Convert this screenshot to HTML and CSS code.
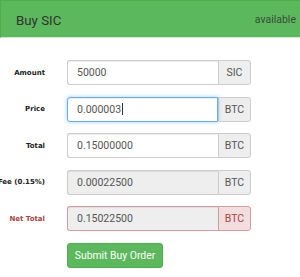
FILE: index.html
```html
<!DOCTYPE html>
<html lang="en">
<head>
    <meta charset="UTF-8">
    <meta name="viewport" content="width=device-width, initial-scale=1.0">
    <title>Buy SIC</title>
    <link rel="stylesheet" href="styles.css">
</head>
<body>
    <div class="panel">
        <div class="panel-heading">
            <span class="panel-title">Buy SIC</span>
            <span class="available">available</span>
        </div>

        <form class="order-form">
            <div class="form-row">
                <label class="row-label">Amount</label>
                <div class="input-group">
                    <div class="field">50000</div>
                    <span class="addon">SIC</span>
                </div>
            </div>
            <div class="form-row">
                <label class="row-label">Price</label>
                <div class="input-group">
                    <div class="field focused">0.000003<span class="caret"></span></div>
                    <span class="addon">BTC</span>
                </div>
            </div>
            <div class="form-row">
                <label class="row-label">Total</label>
                <div class="input-group">
                    <div class="field">0.15000000</div>
                    <span class="addon">BTC</span>
                </div>
            </div>
            <div class="form-row">
                <label class="row-label">Fee (0.15%)</label>
                <div class="input-group">
                    <div class="field readonly">0.00022500</div>
                    <span class="addon">BTC</span>
                </div>
            </div>
            <div class="form-row has-error">
                <label class="row-label">Net Total</label>
                <div class="input-group">
                    <div class="field readonly">0.15022500</div>
                    <span class="addon">BTC</span>
                </div>
            </div>
            <div class="form-row">
                <span class="row-label"></span>
                <button type="button" class="btn-submit">Submit Buy Order</button>
            </div>
        </form>
    </div>
</body>
</html>
```

FILE: styles.css
```css
:root {
    --green: #5cb85c;
    --green-dark: #4cae4c;
    --text: #555;
    --error: #a94442;
}

body {
    margin: 0;
    font-family: Roboto, "Liberation Sans", sans-serif;
    color: #333;
    background: #fff;
}

.panel {
    width: 300px;
}

.panel-heading {
    display: flex;
    justify-content: space-between;
    align-items: center;
    height: 36px;
    padding: 0 4px 0 15px;
    background: var(--green);
    border-top: 1px solid var(--green-dark);
    border-left: 1px solid var(--green-dark);
    border-bottom: 1px solid #cfe9c9;
}

.panel-title {
    font-size: 13.3px;
    color: #333;
    margin-top: 2px;
}

.available {
    font-size: 10.5px;
    color: #3d4a3d;
    margin-top: 1px;
}

.order-form {
    display: flex;
    flex-direction: column;
    gap: 11.6px;
    padding-top: 22px;
}

.form-row {
    display: flex;
    align-items: center;
    gap: 22px;
}

.row-label {
    width: 45px;
    flex: none;
    display: flex;
    justify-content: flex-end;
    white-space: nowrap;
    font-family: "DejaVu Sans", sans-serif;
    font-weight: bold;
    font-size: 7px;
    color: #222;
}

.input-group {
    display: flex;
    width: 184px;
    height: 25px;
}

.field {
    flex: 1;
    display: flex;
    align-items: center;
    padding: 0 9px;
    font-size: 10.5px;
    color: var(--text);
    background: #fff;
    border: 1px solid #ccc;
    border-right: none;
    border-radius: 3px 0 0 3px;
    box-shadow: inset 0 1px 1px rgba(0,0,0,0.075);
}

.field.focused {
    border: 1px solid #66afe9;
    border-radius: 3px 0 0 3px;
    box-shadow: inset 0 1px 1px rgba(0,0,0,0.075), 0 0 4px rgba(102,175,233,0.6);
    position: relative;
    z-index: 1;
}

.caret {
    display: inline-block;
    width: 1px;
    height: 12px;
    margin-left: 1px;
    background: #333;
}

.field.readonly {
    background: #eee;
}

.addon {
    width: 33px;
    display: flex;
    align-items: center;
    justify-content: center;
    font-size: 10.5px;
    color: var(--text);
    background: #eee;
    border: 1px solid #ccc;
    border-radius: 0 3px 3px 0;
    box-sizing: border-box;
}

.has-error .row-label {
    color: var(--error);
}

.has-error .field {
    border-color: #d59c9b;
}

.has-error .addon {
    color: var(--error);
    background: #f2dede;
    border-color: #d59c9b;
}

.btn-submit {
    height: 25px;
    width: 96px;
    padding: 0;
    font-family: Roboto, "Liberation Sans", sans-serif;
    font-size: 10.4px;
    color: #fff;
    background: var(--green);
    border: 1px solid var(--green-dark);
    border-radius: 3px;
    cursor: pointer;
}
```
